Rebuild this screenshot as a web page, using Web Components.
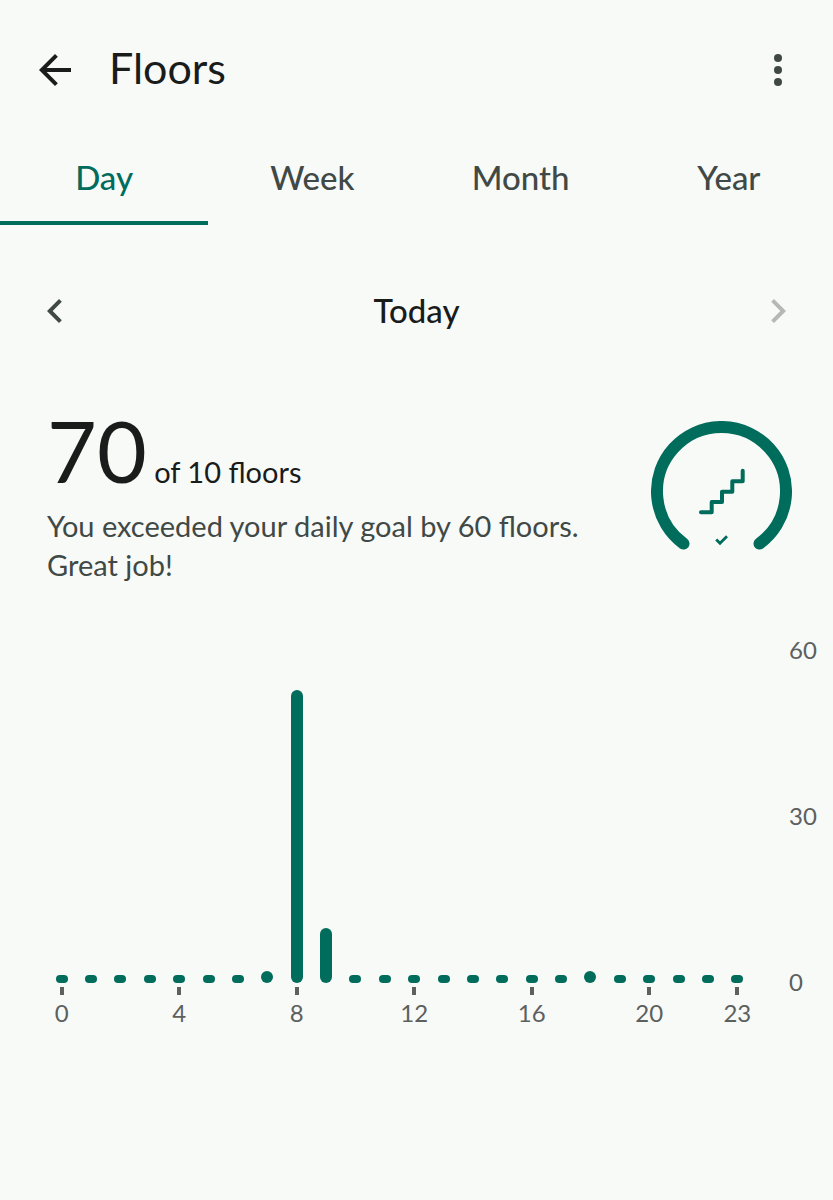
<!DOCTYPE html>
<html lang="en">
<head>
<meta charset="utf-8">
<meta name="viewport" content="width=device-width, initial-scale=1">
<title>Floors</title>
<style>
    body {
        --accent: #006c5b;
        --ink: #191c1b;
        --muted: #404945;
        --axis: #5c605e;
        background-color: #f8faf8;
        color: var(--ink);
        font-family: Lato, Roboto, sans-serif;
        margin: 0;
    }
</style>
</head>
<body>

<floors-page></floors-page>

<script>
class AppBar extends HTMLElement {

    constructor() {
        super();
        this.shadow = this.attachShadow({ mode: 'open' });
    }

    connectedCallback() {
        this.render();
    }

    render() {
        this.shadow.innerHTML =
        `
        <style>
            :host {
                align-items: center;
                display: flex;
                gap: 30px;
                height: 139px;
                padding: 0 31px;
            }

            h1 {
                flex: 1;
                font-size: 43px;
                font-weight: 400;
                line-height: 52px;
                margin: 0;
                padding-bottom: 4px;
            }

            button {
                background: none;
                border: 0;
                color: var(--ink);
                cursor: pointer;
                height: 48px;
                padding: 0;
                width: 48px;
            }

            .menu {
                color: var(--muted);
            }

            svg {
                display: block;
                fill: currentColor;
            }
        </style>

        <button type="button" aria-label="Back">
            <svg width="48" height="48" viewBox="0 0 24 24"><path d="M20 11H7.83l5.59-5.59L12 4l-8 8 8 8 1.41-1.41L7.83 13H20v-2z"/></svg>
        </button>
        <h1><slot></slot></h1>
        <button class="menu" type="button" aria-label="More options">
            <svg width="48" height="48" viewBox="0 0 24 24"><circle cx="12" cy="6" r="2"/><circle cx="12" cy="12" r="2"/><circle cx="12" cy="18" r="2"/></svg>
        </button>
        `;
    }
}

customElements.define('app-bar', AppBar);

class RangeTabs extends HTMLElement {

    constructor() {
        super();
        this.shadow = this.attachShadow({ mode: 'open' });
        this.tabs = ['Day', 'Week', 'Month', 'Year'];
        this.selected = 'Day';
    }

    connectedCallback() {
        this.render();
    }

    render() {
        this.shadow.innerHTML =
        `
        <style>
            :host {
                display: block;
            }

            .tabs {
                display: grid;
                grid-template-columns: repeat(4, 1fr);
            }

            button {
                background: none;
                border: 0;
                border-bottom: 4px solid transparent;
                color: var(--muted);
                cursor: pointer;
                font: inherit;
                font-size: 33px;
                font-weight: 500;
                line-height: 40px;
                padding: 18px 0 24px;
            }

            button[aria-selected="true"] {
                border-bottom-color: var(--accent);
                color: var(--accent);
            }
        </style>

        <div class="tabs" role="tablist">
            ${this.tabs.map(tab => `<button type="button" role="tab" aria-selected="${tab === this.selected}">${tab}</button>`).join('')}
        </div>
        `;

        this.shadow.querySelectorAll('button').forEach(button => {
            button.addEventListener('click', () => {
                this.selected = button.textContent;
                this.render();
            });
        });
    }
}

customElements.define('range-tabs', RangeTabs);

class DateNav extends HTMLElement {

    constructor() {
        super();
        this.shadow = this.attachShadow({ mode: 'open' });
    }

    connectedCallback() {
        this.render();
    }

    render() {
        this.shadow.innerHTML =
        `
        <style>
            :host {
                align-items: center;
                display: flex;
                justify-content: space-between;
                padding: 62px 31px 71px;
            }

            h2 {
                font-size: 33px;
                font-weight: 500;
                line-height: 46px;
                margin: 0;
                padding-bottom: 2px;
            }

            button {
                background: none;
                border: 0;
                color: var(--muted);
                cursor: pointer;
                height: 48px;
                padding: 0;
                width: 48px;
            }

            button:disabled {
                color: #b5b8b6;
                cursor: default;
            }

            svg {
                display: block;
                fill: currentColor;
            }
        </style>

        <button type="button" aria-label="Previous day">
            <svg width="48" height="48" viewBox="0 0 24 24"><path d="M15.41 7.41L14 6l-6 6 6 6 1.41-1.41L10.83 12z"/></svg>
        </button>
        <h2><slot></slot></h2>
        <button type="button" aria-label="Next day" disabled>
            <svg width="48" height="48" viewBox="0 0 24 24"><path d="M10 6L8.59 7.41 13.17 12l-4.58 4.59L10 18l6-6z"/></svg>
        </button>
        `;
    }
}

customElements.define('date-nav', DateNav);

class GoalRing extends HTMLElement {

    constructor() {
        super();
        this.shadow = this.attachShadow({ mode: 'open' });
    }

    connectedCallback() {
        this.render();
    }

    render() {
        this.shadow.innerHTML =
        `
        <style>
            :host {
                display: block;
                flex: none;
            }

            svg {
                display: block;
                fill: none;
                stroke: var(--accent);
            }
        </style>

        <svg width="141" height="141" viewBox="0 0 141 141" role="img" aria-label="Goal reached">
            <path d="M32.5 122.6A64.5 64.5 0 1 1 108.5 122.6" stroke-width="12" stroke-linecap="round"/>
            <path d="M50 91.3H60.7V81H71V70.7H81.3V60.3H91.7V49.7" stroke-width="4" stroke-linecap="round" stroke-linejoin="round"/>
            <path d="M65.2 118.5L69 122.2L76 115.2" stroke-width="2.8"/>
        </svg>
        `;
    }
}

customElements.define('goal-ring', GoalRing);

class GoalSummary extends HTMLElement {

    constructor() {
        super();
        this.shadow = this.attachShadow({ mode: 'open' });
    }

    connectedCallback() {
        this.render();
    }

    render() {
        this.shadow.innerHTML =
        `
        <style>
            :host {
                align-items: flex-start;
                display: flex;
                gap: 24px;
                justify-content: space-between;
                padding: 0 41px 0 47px;
            }

            .text {
                flex: 1;
                padding-top: 4px;
            }

            p {
                margin: 0;
            }

            .total {
                font-size: 29px;
                line-height: 39px;
            }

            .total strong {
                font-size: 86px;
                font-weight: 400;
                line-height: 80px;
            }

            .message {
                color: var(--muted);
                font-size: 29px;
                line-height: 39px;
                margin-top: 15px;
            }

            goal-ring {
                padding-top: 15px;
            }
        </style>

        <div class="text">
            <p class="total"><strong>${this.getAttribute('total')}</strong> of ${this.getAttribute('goal')} floors</p>
            <p class="message"><slot></slot></p>
        </div>
        <goal-ring></goal-ring>
        `;
    }
}

customElements.define('goal-summary', GoalSummary);

class HourChart extends HTMLElement {

    constructor() {
        super();
        this.shadow = this.attachShadow({ mode: 'open' });
        this.max = 60;
        this.values = new Array(24).fill(0);
        this.values[7] = 2;
        this.values[8] = 53;
        this.values[9] = 10;
        this.values[18] = 2;
        this.labels = [0, 4, 8, 12, 16, 20, 23];
    }

    connectedCallback() {
        this.render();
    }

    renderHour(value, hour) {
        const label = this.labels.includes(hour) ? `<span class="tick"></span><span class="label">${hour}</span>` : '';

        return `
            <div class="hour">
                <div class="track"><div class="bar ${value ? 'filled' : ''}" style="height: ${value / this.max * 100}%"></div></div>
                ${label}
            </div>
        `;
    }

    render() {
        this.shadow.innerHTML =
        `
        <style>
            :host {
                --plot: 332px;
                color: var(--axis);
                display: flex;
                font-size: 24px;
                gap: 37px;
                line-height: 32px;
                padding: 67px 0 0 47px;
            }

            .hours {
                display: grid;
                flex: 1;
                grid-template-columns: repeat(24, minmax(0, 1fr));
            }

            .hour {
                align-items: center;
                display: flex;
                flex-direction: column;
            }

            .track {
                align-items: flex-end;
                display: flex;
                height: var(--plot);
            }

            .bar {
                background-color: var(--accent);
                border-radius: 4px;
                min-height: 8px;
                width: 12px;
            }

            .bar.filled {
                border-radius: 6px;
                min-height: 12px;
            }

            .tick {
                background-color: var(--axis);
                height: 8px;
                margin: 4px 0 2px;
                width: 4px;
            }

            .scale {
                display: flex;
                flex-direction: column;
                height: calc(var(--plot) + 32px);
                justify-content: space-between;
                margin-top: -17px;
                width: 44px;
            }
        </style>

        <div class="hours">
            ${this.values.map((value, hour) => this.renderHour(value, hour)).join('')}
        </div>
        <div class="scale">
            <span>60</span>
            <span>30</span>
            <span>0</span>
        </div>
        `;
    }
}

customElements.define('hour-chart', HourChart);

class FloorsPage extends HTMLElement {

    constructor() {
        super();
        this.shadow = this.attachShadow({ mode: 'open' });
    }

    connectedCallback() {
        this.render();
    }

    render() {
        this.shadow.innerHTML =
        `
        <style>
            :host {
                display: block;
            }
        </style>

        <app-bar>Floors</app-bar>
        <range-tabs></range-tabs>
        <date-nav>Today</date-nav>
        <goal-summary total="70" goal="10">You exceeded your daily goal by 60 floors. Great job!</goal-summary>
        <hour-chart></hour-chart>
        `;
    }
}

customElements.define('floors-page', FloorsPage);
</script>
</body>
</html>
